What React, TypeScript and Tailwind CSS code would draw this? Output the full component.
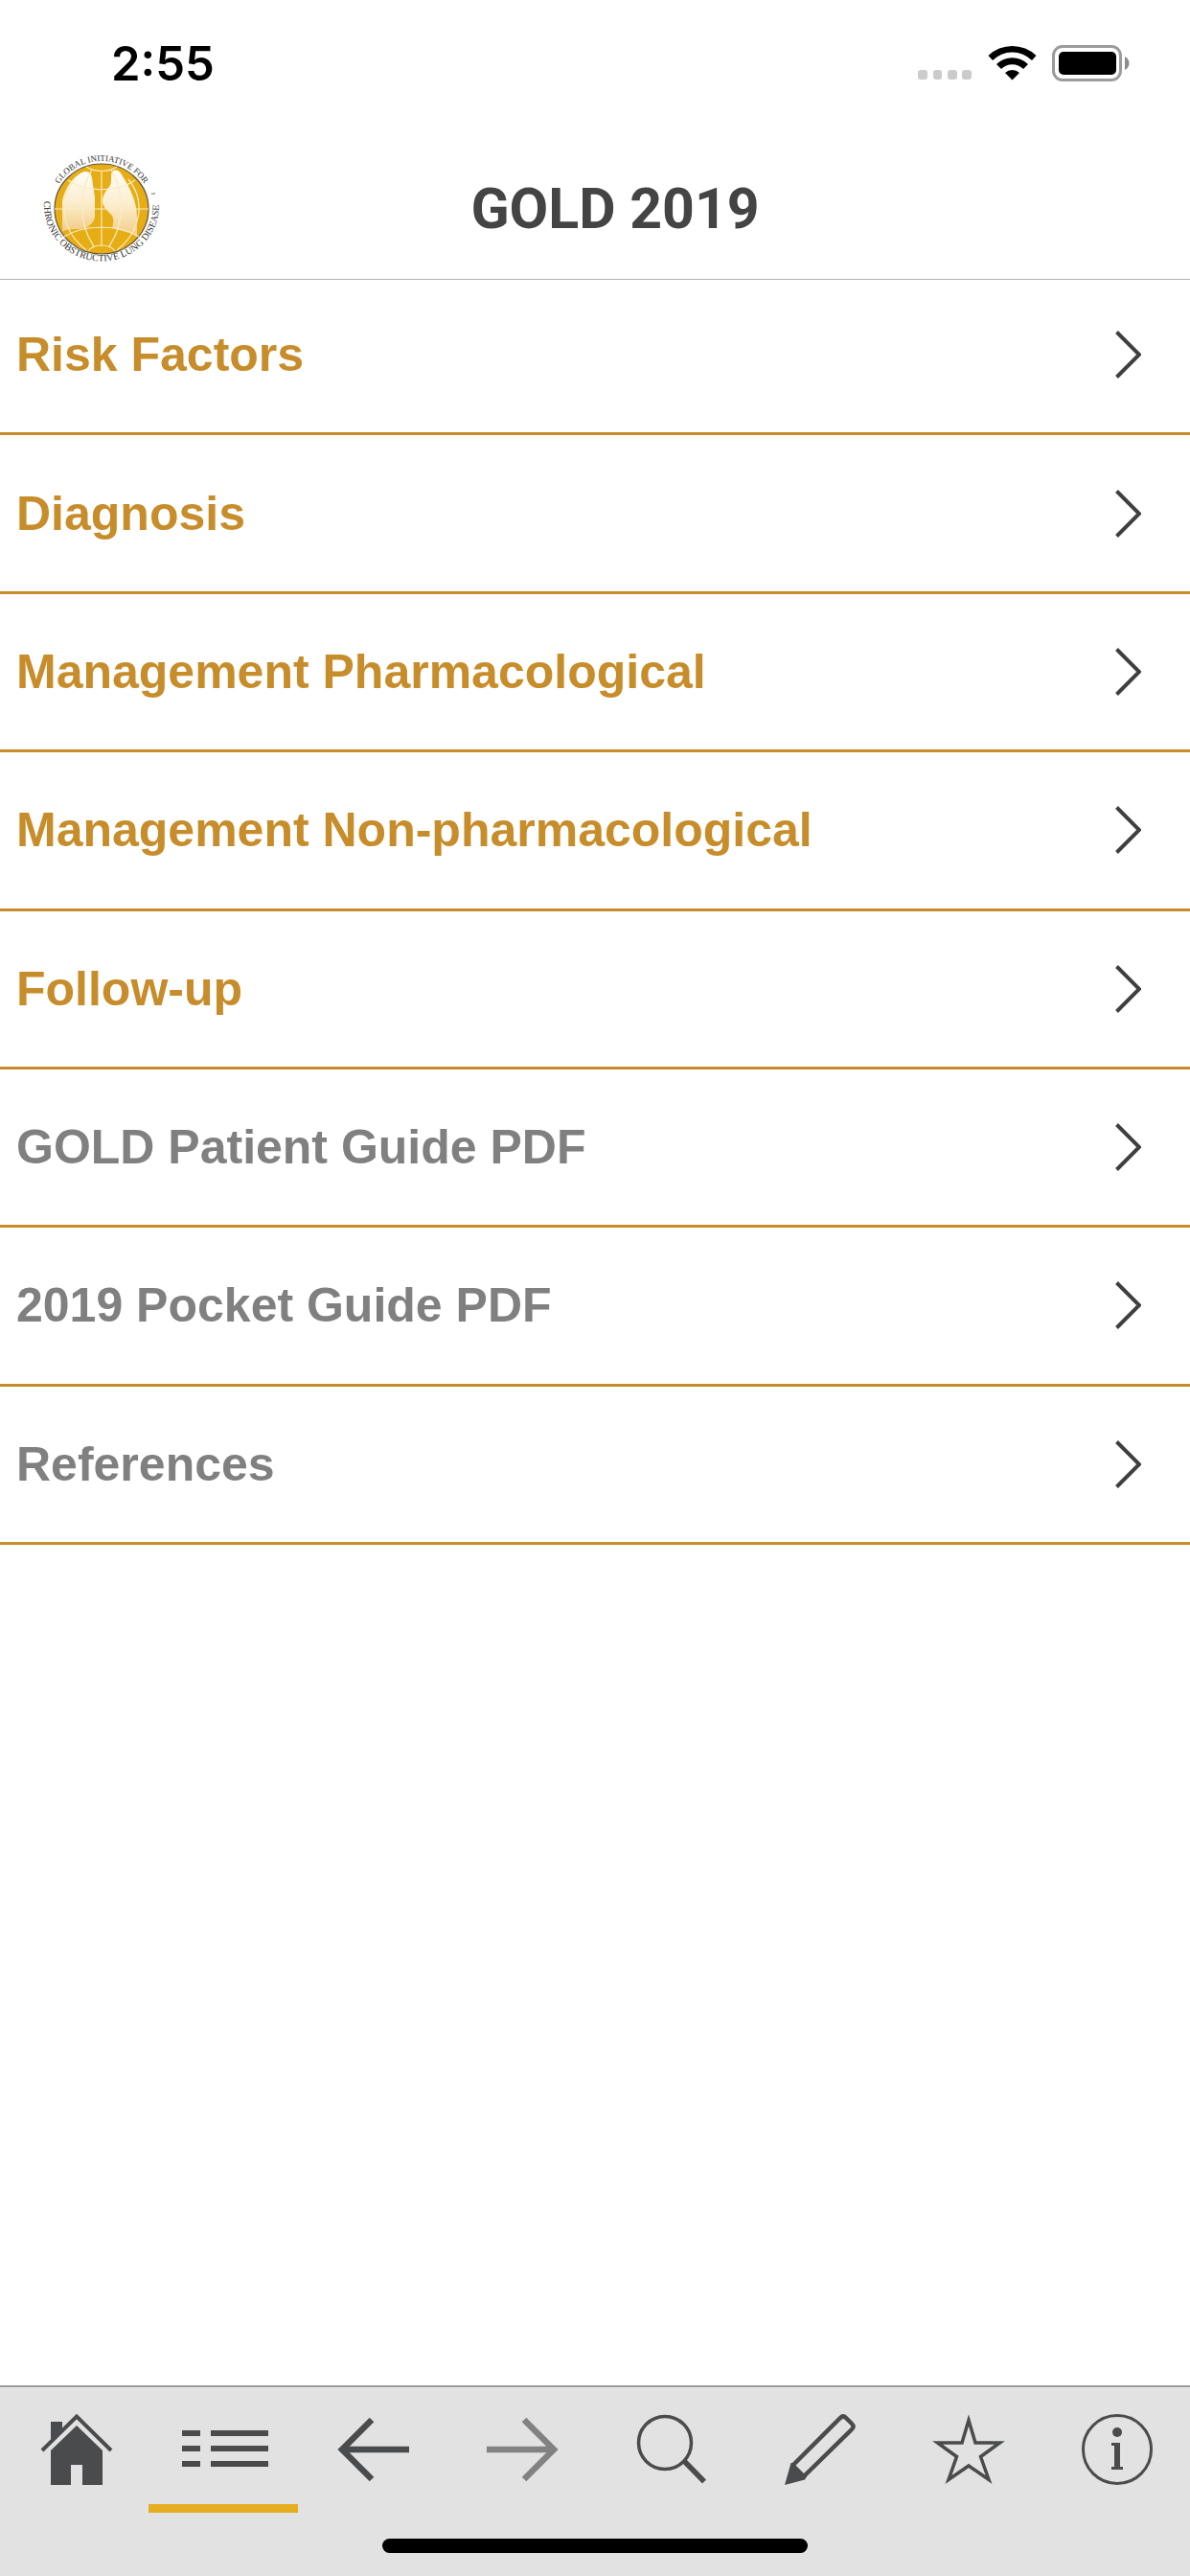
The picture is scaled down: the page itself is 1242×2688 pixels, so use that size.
import React from 'react';

interface MenuItem {
  label: string;
  primary: boolean;
}

const menuItems: MenuItem[] = [
  { label: 'Risk Factors', primary: true },
  { label: 'Diagnosis', primary: true },
  { label: 'Management Pharmacological', primary: true },
  { label: 'Management Non-pharmacological', primary: true },
  { label: 'Follow-up', primary: true },
  { label: 'GOLD Patient Guide PDF', primary: false },
  { label: '2019 Pocket Guide PDF', primary: false },
  { label: 'References', primary: false },
];

const StatusBar: React.FC = () => (
  <div className="flex h-[132px] shrink-0 items-center justify-between pl-[116px] pr-[62px]">
    <span className="font-['Inter',sans-serif] text-[49px] leading-none font-semibold text-black">2:55</span>
    <svg className="h-10 w-[222px]" viewBox="0 0 222 40" aria-label="Wi-Fi, battery full">
      <g fill="#cbcbcb">
        <rect x="0" y="27" width="10" height="10" rx="3" />
        <rect x="16" y="27" width="9" height="10" rx="3" />
        <rect x="31" y="27" width="10" height="10" rx="3" />
        <rect x="46" y="27" width="10" height="10" rx="3" />
      </g>
      <g transform="translate(98.5 37.5)">
        <path d="M-25 -25.5A36 36 0 0 1 25 -25.5L20.500 -20.500A29 29 0 0 0 -20.500 -20.500Z" />
        <path d="M-16.500 -16.500A23.500 23.500 0 0 1 16.500 -16.500L11.500 -11.500A16.500 16.500 0 0 0 -11.500 -11.500Z" />
        <path d="M0 0L-7.500 -7.500A11 11 0 0 1 7.500 -7.500Z" />
      </g>
      <rect x="141.500" y="2.500" width="70" height="35" rx="9.500" fill="none" stroke="#9b9b9b" strokeWidth="3" />
      <rect x="147" y="8" width="60" height="24" rx="5" />
      <path d="M216 13v14c6-3 6-11 0-14z" fill="#8c8c8c" />
    </svg>
  </div>
);

const GoldLogo: React.FC = () => (
  <svg className="h-[120px] w-[124px] overflow-visible" viewBox="0 0 124 120" role="img" aria-label="GOLD logo">
    <defs>
      <linearGradient id="lung" x1="0" y1="0" x2="0" y2="1">
        <stop offset="0" stopColor="#fffdf8" />
        <stop offset="0.500" stopColor="#fbeed0" />
        <stop offset="1" stopColor="#f3cc85" />
      </linearGradient>
      <path id="arc-top" d="M10 60A52 50 0 0 1 114 60" />
      <path id="arc-bottom" d="M3 46A60 58 0 1 0 121 46" />
    </defs>
    <ellipse cx="62" cy="60" rx="49" ry="47" fill="#e7ad14" stroke="#5c5540" strokeWidth="1.200" />
    <path d="M44 21c5 0 7 1 8 7l3 20v21c-1 5-6 9-10 11-8 2-20 0-24 4V52c3-15 12-27 23-31z" fill="url(#lung)" />
    <path d="M74 20c5-2 8 2 10 6 8 12 15 28 15 42v21c-7-5-20-7-26-9 2-7 2-12-2-15-4-4-8-8-8-13 0-6 3-10 7-15 4-6 0-13 4-17z" fill="url(#lung)" />
    <g fill="none" stroke="#fbecc4" strokeWidth="1.200">
      <path d="M62 20v79M13 60h98" />
      <path d="M46 16c9 6 23 6 32 0M27 30c18 13 52 13 70 0" />
      <path d="M23 89c20-13 58-13 78 0M48 104c6-8 22-8 28 0" />
      <path d="M52 19C38 42 38 76 54 99M72 19c14 23 14 57-2 80" />
      <path d="M34 29C16 51 20 83 46 103M90 29c18 22 14 54-12 74" />
    </g>
    <g fill="#333333" className="font-['Liberation_Serif',serif]">
      <text textAnchor="middle" fontSize="9">
        <textPath href="#arc-top" startOffset="50%">GLOBAL INITIATIVE FOR</textPath>
      </text>
      <text textAnchor="middle" fontSize="10">
        <textPath href="#arc-bottom" startOffset="49%">CHRONIC OBSTRUCTIVE LUNG DISEASE</textPath>
      </text>
      <text x="113" y="46" fontSize="5">™</text>
    </g>
  </svg>
);

const Header: React.FC = () => (
  <header className="flex h-40 shrink-0 items-center border-b border-[#b0b0b0] pt-3">
    <div className="flex w-[168px] shrink-0 justify-end">
      <GoldLogo />
    </div>
    <h1 className="flex-1 text-center font-['Roboto',sans-serif] text-[59px] leading-[72px] font-bold text-[#444444]">GOLD 2019</h1>
    <div className="w-[126px] shrink-0"></div>
  </header>
);

const Chevron: React.FC = () => (
  <svg className="h-[50px] w-[27px] shrink-0" viewBox="0 0 27 50" fill="none" stroke="#3f3f3f" strokeWidth="4" aria-hidden="true">
    <path d="M1.500 1.500L25 25L1.500 48.500" />
  </svg>
);

const MenuRow: React.FC<{ item: MenuItem }> = ({ item }) => (
  <li className="flex border-b-3 border-[#c88d2b]">
    <a href="#" className="flex flex-1 items-center justify-between pl-[17px] pr-[51px]">
      <span className={item.primary ? 'text-[#c88d2b]' : 'text-[#808080]'}>{item.label}</span>
      <Chevron />
    </a>
  </li>
);

interface TabProps {
  label: string;
  active?: boolean;
  children: React.ReactNode;
}

const Tab: React.FC<TabProps> = ({ label, active, children }) => (
  <button
    type="button"
    aria-label={label}
    className={`flex h-[131px] flex-1 justify-center border-b-9 pt-[27px] pl-1 ${active ? 'border-[#e7ad20]' : 'border-transparent'}`}
  >
    {children}
  </button>
);

const iconClass = 'h-20 w-24';

const TabBar: React.FC = () => (
  <footer className="flex h-[199px] shrink-0 flex-col border-t-2 border-[#9a9a9a] bg-[#e2e2e2] text-[#4a4b4c]">
    <nav className="flex">
      <Tab label="Home">
        <svg className={iconClass} viewBox="0 0 96 80" fill="currentColor">
          <path d="M21 28V9h12v7L21 28zM48 13l27 26v36H54V54H42v21H21V39z" />
          <path d="M12 39L48 3.500L84 39" fill="none" stroke="currentColor" strokeWidth="4" />
        </svg>
      </Tab>
      <Tab label="Contents" active>
        <svg className={iconClass} viewBox="0 0 96 80" fill="currentColor">
          <path d="M3 18h19v6H3zM33 18h60v6H33zM3 34h19v6H3zM33 34h60v6H33zM3 50h19v6H3zM33 50h60v6H33z" />
        </svg>
      </Tab>
      <Tab label="Back">
        <svg className={iconClass} viewBox="0 0 96 80" fill="none" stroke="currentColor" strokeWidth="6.500">
          <path d="M46 7L15 38L46 69M17 38h68" />
        </svg>
      </Tab>
      <Tab label="Forward">
        <svg className={iconClass} viewBox="0 0 96 80" fill="none" stroke="#828282" strokeWidth="6.500">
          <path d="M50 7L81 38L50 69M79 38H11" />
        </svg>
      </Tab>
      <Tab label="Search">
        <svg className={iconClass} viewBox="0 0 96 80" fill="none" stroke="currentColor">
          <circle cx="41" cy="31" r="27.500" strokeWidth="3.500" />
          <path d="M61 50L82 71.500" strokeWidth="5.500" />
        </svg>
      </Tab>
      <Tab label="Notes">
        <svg className={iconClass} viewBox="0 0 96 80" fill="none" stroke="currentColor" strokeWidth="4.500">
          <path d="M20 54L69 5q3-3 6 0l6 6q3 3 0 6L31 66" />
          <path d="M17.500 52L11 75L32 69.500L34 66L20 52z" fill="currentColor" stroke="none" />
        </svg>
      </Tab>
      <Tab label="Favorites">
        <svg className={iconClass} viewBox="0 0 96 80" fill="none" stroke="currentColor" strokeWidth="3.500" strokeMiterlimit="10">
          <path d="M48 7.500L55 31H80.500L60.500 45.500L69 69.500L48 55L27 69.500L35.500 45.500L15.500 31H41z" />
        </svg>
      </Tab>
      <Tab label="Info">
        <svg className={iconClass} viewBox="0 0 96 80" fill="currentColor">
          <circle cx="48" cy="38" r="35.500" fill="none" stroke="currentColor" strokeWidth="3" />
          <circle cx="48" cy="20" r="5" />
          <path d="M42 31h9v25h3v3H42v-3h3V34h-3z" />
        </svg>
      </Tab>
    </nav>
    <div className="mx-auto mt-[27px] h-[15px] w-[444px] rounded-full bg-black"></div>
  </footer>
);

const App: React.FC = () => {
  return (
    <div className="flex min-h-screen flex-col bg-white">
      <StatusBar />
      <Header />
      <main className="-mt-[3px] flex-1">
        <ul className="grid h-[1323px] auto-rows-fr font-['Liberation_Sans',sans-serif] text-[50px] leading-[60px] font-bold">
          {menuItems.map((item) => (
            <MenuRow key={item.label} item={item} />
          ))}
        </ul>
      </main>
      <TabBar />
    </div>
  );
};

export default App;
